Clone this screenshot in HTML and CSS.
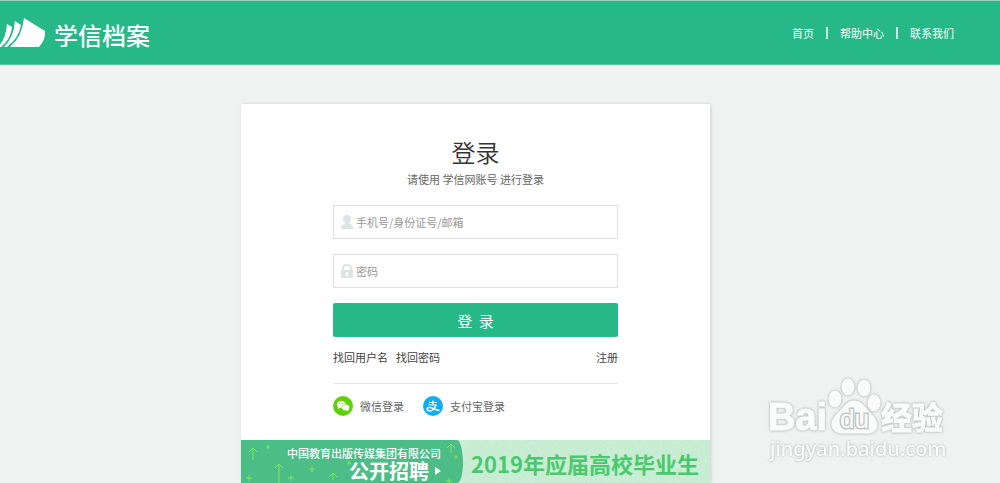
FILE: index.html
```html
<!DOCTYPE html>
<html lang="zh-CN">
  <head>
    <title>学信档案</title>
    <meta charset="utf-8" />
    <link rel="stylesheet" href="styles.css">
  </head>
  <body>
    <header class="header">
      <a class="logo" href="#">
        <svg class="logo-mark" width="46" height="30" viewBox="0 0 46 30" fill="#fff" aria-hidden="true">
          <path d="M24 0 L45 13 Q46 21 39 29 H10 Q22 19 24 0 Z" />
          <path d="M15 3 L21 7 Q19 20 7 29 H4 Q14 19 15 3 Z" />
          <path d="M7 6 L12 9 Q11 21 1 29 H-2 Q6 21 7 6 Z" />
        </svg>
        <span class="logo-text">学信档案</span>
      </a>
      <nav class="nav">
        <a href="#">首页</a>
        <span class="bar"></span>
        <a href="#">帮助中心</a>
        <span class="bar"></span>
        <a href="#">联系我们</a>
      </nav>
    </header>

    <main class="main">
      <div class="card">
        <form class="login">
          <h1>登录</h1>
          <p class="tip">请使用 学信网账号 进行登录</p>

          <div class="field">
            <label for="username" aria-label="用户名">
              <svg width="12" height="14" viewBox="0 0 12 14" fill="#e0e3e3">
                <circle cx="6" cy="4" r="4" />
                <path d="M4 7 H8 V9 Q12 9 12 14 H0 Q0 9 4 9 Z" />
              </svg>
            </label>
            <input id="username" type="text" placeholder="手机号/身份证号/邮箱">
          </div>

          <div class="field">
            <label for="password" aria-label="密码">
              <svg width="12" height="14" viewBox="0 0 12 14">
                <path d="M2 7 V4 Q2 1 6 1 Q10 1 10 4 V7" fill="none" stroke="#e0e3e3" stroke-width="2" />
                <rect y="6" width="12" height="8" rx="1" fill="#e0e3e3" />
                <path d="M6 8 V12" stroke="#fff" stroke-width="2" />
              </svg>
            </label>
            <input id="password" type="password" placeholder="密码">
          </div>

          <button class="submit" type="submit">登&nbsp;&nbsp;录</button>

          <div class="links">
            <a href="#">找回用户名</a>
            <a href="#">找回密码</a>
            <a class="register" href="#">注册</a>
          </div>

          <div class="social">
            <a href="#">
              <svg width="20" height="20" viewBox="0 0 20 20" aria-hidden="true">
                <circle cx="10" cy="10" r="10" fill="#62d008" />
                <ellipse cx="8.300" cy="8.500" rx="4.300" ry="3.600" fill="#fff" />
                <path d="M5 10.500 L4.800 13 L7.500 11.800 Z" fill="#fff" />
                <ellipse cx="12.600" cy="11.400" rx="3.900" ry="3.200" fill="#fff" stroke="#62d008" stroke-width=".5" />
                <path d="M13 14 L15.500 15.300 L15.300 13 Z" fill="#fff" />
                <g fill="#62d008">
                  <circle cx="6.900" cy="7.600" r=".5" />
                  <circle cx="9.600" cy="7.600" r=".5" />
                  <circle cx="11.400" cy="10.800" r=".4" />
                  <circle cx="13.800" cy="10.800" r=".4" />
                </g>
              </svg>
              微信登录
            </a>
            <a href="#">
              <svg width="20" height="20" viewBox="0 0 20 20" fill="none" stroke="#fff" aria-hidden="true">
                <circle cx="10" cy="10" r="10" fill="#0eaef0" stroke="none" />
                <path d="M6 6.500 H14 M5.500 9 H14 M10 4.500 V9" stroke-width="1.200" />
                <path d="M13 9 C11.500 13 9 15 6.500 15 C3 14.500 3.500 11.500 6.500 11.500 C9.500 11.500 12 14 16.500 14.500" stroke-width="1.400" />
              </svg>
              支付宝登录
            </a>
          </div>
        </form>

        <a class="banner" href="#">
          <div class="banner-left">
            <svg class="sparks" width="222" height="43" viewBox="0 0 222 43" fill="none" stroke="#7bea52" aria-hidden="true">
              <path d="M12 20 V8 M8 12 L12 8 L16 12" />
              <path d="M38 43 V24 M34 28 L38 24 L42 28" />
              <path d="M92 40 V33 M88 37 L92 33 L96 37" />
              <path d="M210 13 V4 M206 8 L210 4 L214 8" />
              <path d="M25 7 H29 M27 5 V9 M5 38 H11 M8 35 V41 M47 38 H53 M50 35 V41 M68 29 H74 M71 26 V32 M106 23 H110 M108 21 V25 M213 17 H217 M215 15 V19 M205 41 H211 M208 38 V43" />
            </svg>
            <span class="company">中国教育出版传媒集团有限公司</span>
            <strong class="hiring">公开招聘
              <svg width="6" height="8" viewBox="0 0 6 8" fill="#fff" aria-hidden="true"><path d="M0 0 L6 4 L0 8 Z" /></svg>
            </strong>
          </div>
          <div class="banner-right">
            <svg class="grain" width="100%" height="100%" aria-hidden="true">
              <filter id="grain">
                <feTurbulence type="fractalNoise" baseFrequency=".4" numOctaves="2" />
              </filter>
              <rect width="100%" height="100%" filter="url(#grain)" />
            </svg>
            <strong class="graduates">2019年应届高校毕业生</strong>
          </div>
        </a>
      </div>
    </main>

    <div class="watermark">
      <svg width="188" height="96" viewBox="0 0 188 96" role="img" aria-label="Baidu 经验">
        <g class="mark">
          <text class="mark-bai" x="2" y="55">Bai</text>
          <ellipse cx="69" cy="24" rx="6" ry="8" />
          <ellipse cx="82" cy="12" rx="6" ry="8" />
          <ellipse cx="98" cy="13" rx="6" ry="8" />
          <ellipse cx="108" cy="28" rx="6" ry="8" />
          <path d="M88 26 C96 26 99 33 106 40 C114 48 112 58 102 58 H76 C65 58 63 48 70 40 C78 33 80 26 88 26 Z" />
          <text class="mark-cn" x="115" y="54">经验</text>
        </g>
        <text class="mark-url" x="4" y="81">jingyan.baidu.com</text>
        <text class="mark-du" x="74" y="53">du</text>
      </svg>
    </div>
  </body>
</html>
```

FILE: styles.css
```css
* {
  box-sizing: border-box;
}
body {
  margin: 0;
  min-height: 100vh;
  position: relative;
  background: #eef2f1;
  color: #666;
  font-family: "Noto Sans CJK SC", "Noto Sans", sans-serif;
  font-size: 11px;
  line-height: 16px;
}
a {
  color: inherit;
  text-decoration: none;
}

.header {
  display: flex;
  align-items: center;
  justify-content: space-between;
  height: 65px;
  padding-right: 46px;
  background: #26b887;
  border-top: 1px solid #9fd0bf;
  border-bottom: 1px solid #58c7a2;
  color: #fff;
}
.logo {
  display: flex;
  align-items: center;
  gap: 8px;
}
.logo-text {
  font-size: 24px;
  font-weight: 500;
  line-height: 32px;
  padding-top: 4px;
}
.nav {
  display: flex;
  align-items: center;
  gap: 12px;
}
.bar {
  width: 2px;
  height: 12px;
  background: #c9eee0;
}

.main {
  padding: 39px 49px 0 0;
}
.card {
  max-width: 469px;
  margin: 0 auto;
  background: #fff;
  box-shadow: 1px 0 3px rgba(0, 0, 0, 0.15);
}
.login {
  padding: 30px 92px 24px;
}
h1 {
  margin: 0;
  color: #333;
  font-size: 24px;
  font-weight: 350;
  line-height: 36px;
  text-align: center;
}
.tip {
  margin: 0;
  padding: 1px 0 18px;
  text-align: center;
}

.field {
  display: flex;
  align-items: center;
  height: 34px;
  margin-bottom: 15px;
  padding: 0 7px;
  border: 1px solid #dfe1e1;
}
.field label {
  display: flex;
}
.field input {
  flex: 1;
  min-width: 0;
  padding: 0 3px;
  border: 0;
  outline: 0;
  background: none;
  font: inherit;
}
.field input::placeholder {
  color: #999;
}
.submit {
  display: block;
  width: 100%;
  height: 34px;
  border: 0;
  border-radius: 2px;
  background: #26b887;
  color: #fff;
  font-family: inherit;
  font-size: 15px;
}

.links {
  display: flex;
  gap: 8px;
  padding: 12px 0 18px;
  border-bottom: 1px solid #e6e6e6;
  color: #444;
}
.register {
  margin-left: auto;
}
.social {
  display: flex;
  gap: 19px;
  padding-top: 12px;
}
.social a {
  display: flex;
  align-items: center;
  gap: 7px;
}

.banner {
  display: flex;
  height: 43px;
  overflow: hidden;
  background: #c9f0d5;
}
.banner-left {
  display: flex;
  flex-direction: column;
  align-items: flex-end;
  position: relative;
  z-index: 1;
  width: 222px;
  padding: 5px 22px 0 0;
  background: #4dbd87;
  border-radius: 0 6px 6px 0 / 0 24px 19px 0;
  color: #fff;
}
.sparks {
  position: absolute;
  top: 0;
  left: 0;
}
.company {
  position: relative;
  font-weight: 500;
}
.hiring {
  display: flex;
  align-items: center;
  gap: 6px;
  position: relative;
  font-size: 20px;
  line-height: 20px;
}
.banner-right {
  flex: 1;
  position: relative;
  padding-left: 8px;
}
.grain {
  position: absolute;
  top: 0;
  left: 0;
  opacity: 0.12;
}
.graduates {
  position: relative;
  color: #49c96d;
  font-size: 22px;
  line-height: 46px;
  white-space: nowrap;
}

.watermark {
  position: absolute;
  right: 46px;
  bottom: 12px;
}
.watermark svg {
  display: block;
}
.mark {
  fill: #fafcfb;
  stroke: #fafcfb;
  stroke-width: 1px;
  filter: drop-shadow(0 0 1px #b5b9b8) drop-shadow(0 0 1px #d0d3d2);
}
.mark-bai {
  font: bold 38px "Liberation Sans", Arial, sans-serif;
}
.mark-cn {
  font-size: 31px;
  font-weight: 700;
}
.mark-url {
  fill: #fafcfb;
  filter: drop-shadow(0 0 1px #a5a9a8);
  font: 500 20px "Noto Sans", sans-serif;
}
.mark-du {
  fill: #fafcfb;
  stroke: #c3c7c6;
  stroke-width: 3px;
  paint-order: stroke;
  font: 26px "Liberation Sans", Arial, sans-serif;
}
```
